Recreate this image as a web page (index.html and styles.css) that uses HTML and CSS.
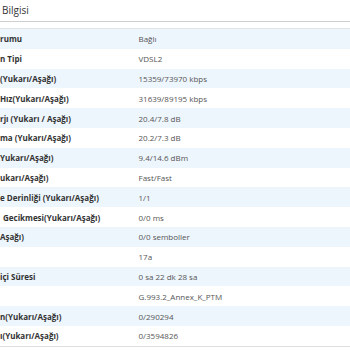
FILE: index.html
```html
<!DOCTYPE html>
<html lang="tr">
<head>
<meta charset="utf-8">
<title>Bilgisi</title>
<link rel="stylesheet" href="styles.css">
</head>
<body>
<div class="panel">
  <div class="panel-head">Bilgisi</div>
  <div class="table">
    <div class="row odd"><div class="label">rumu</div><div class="value">Bağlı</div></div>
    <div class="row"><div class="label">n Tipi</div><div class="value">VDSL2</div></div>
    <div class="row odd"><div class="label">(Yukarı/Aşağı)</div><div class="value">15359/73970 kbps</div></div>
    <div class="row"><div class="label">Hız(Yukarı/Aşağı)</div><div class="value">31639/89195 kbps</div></div>
    <div class="row odd"><div class="label">rjı (Yukarı / Aşağı)</div><div class="value">20.4/7.8 dB</div></div>
    <div class="row"><div class="label">ma (Yukarı/Aşağı)</div><div class="value">20.2/7.3 dB</div></div>
    <div class="row odd"><div class="label">Yukarı/Aşağı)</div><div class="value">9.4/14.6 dBm</div></div>
    <div class="row"><div class="label">ukarı/Aşağı)</div><div class="value">Fast/Fast</div></div>
    <div class="row odd"><div class="label">e Derinliği (Yukarı/Aşağı)</div><div class="value">1/1</div></div>
    <div class="row"><div class="label indent">Gecikmesi(Yukarı/Aşağı)</div><div class="value">0/0 ms</div></div>
    <div class="row odd"><div class="label">Aşağı)</div><div class="value">0/0 semboller</div></div>
    <div class="row"><div class="label"></div><div class="value">17a</div></div>
    <div class="row odd"><div class="label">içi Süresi</div><div class="value">0 sa 22 dk 28 sa</div></div>
    <div class="row"><div class="label"></div><div class="value">G.993.2_Annex_K_PTM</div></div>
    <div class="row odd"><div class="label">n(Yukarı/Aşağı)</div><div class="value">0/290294</div></div>
    <div class="row"><div class="label">ı(Yukarı/Aşağı)</div><div class="value">0/3594826</div></div>
  </div>
</div>
</body>
</html>
```
FILE: styles.css
```css
html, body {
  margin: 0;
  padding: 0;
  background: #ffffff;
}
body {
  font-family: "Open Sans", "Noto Sans", sans-serif;
  color: #333333;
}
.panel {
  width: 350px;
}
.panel-head {
  font-size: 10px;
  line-height: 20px;
  padding: 0 0 1px 2px;
  color: #333333;
  border-bottom: 1px solid #cfcfcf;
}
.table {
  margin-top: 6px;
  border-top: 1px solid #e4e4e4;
  border-bottom: 1px solid #dedede;
}
.row {
  display: grid;
  grid-template-columns: 138.5px 1fr;
  height: 19.8px;
  align-items: center;
  font-size: 8px;
  background: #ffffff;
}
.row.odd {
  background: #eef6fd;
}
.label {
  font-weight: 700;
  color: #333333;
  white-space: nowrap;
  overflow: hidden;
}
.label.indent {
  padding-left: 3px;
}
.value {
  color: #555555;
  white-space: nowrap;
}
```
